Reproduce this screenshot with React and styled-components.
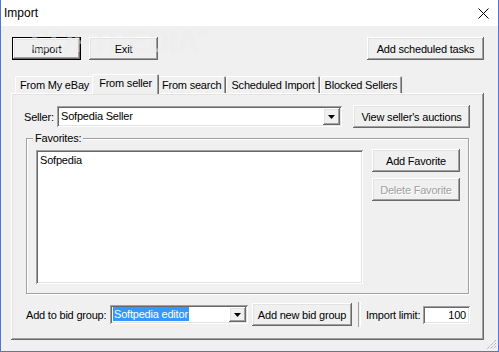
import styled, { createGlobalStyle, css } from 'styled-components';

const bg = '#f0f0f0';
const shadowDark = '#696969';
const shadow = '#a0a0a0';
const light = '#e3e3e3';
const accent = '#4a78d4';

const GlobalStyle = createGlobalStyle`
  html, body {
    margin: 0;
    padding: 0;
    background: #fff;
  }
  body {
    font-family: "Liberation Sans", Arial, sans-serif;
    font-size: 11px;
    color: #000;
  }
`;

const raised = css`
  box-shadow:
    inset -1px -1px ${shadowDark},
    inset 1px 1px #fff,
    inset -2px -2px ${shadow},
    inset 2px 2px ${light};
`;

const sunken = css`
  box-shadow:
    inset 1px 1px ${shadow},
    inset -1px -1px #fff,
    inset 2px 2px ${shadowDark},
    inset -2px -2px ${light};
`;

const Window = styled.div`
  position: relative;
  box-sizing: border-box;
  width: 499px;
  height: 352px;
  border: 1px solid ${accent};
  border-top: none;
  background: ${bg};
  display: flex;
  flex-direction: column;
  overflow: hidden;
  letter-spacing: -0.2px;
`;

const TitleBar = styled.div`
  height: 26px;
  flex: none;
  background: #fff;
  display: flex;
  align-items: center;
  justify-content: space-between;
  padding: 0 9px 0 3px;
  font-size: 12px;
  letter-spacing: 0;
`;

const CloseIcon = styled.svg`
  width: 11px;
  height: 11px;
`;

const Body = styled.div`
  flex: 1;
  display: flex;
  flex-direction: column;
  padding: 11px 14px 0 11px;
`;

const TopRow = styled.div`
  display: flex;
  align-items: center;
  gap: 8px;
  height: 23px;
`;

const Button = styled.button`
  position: relative;
  z-index: 1;
  box-sizing: border-box;
  width: ${p => p.$w || 69}px;
  height: ${p => p.$h || 23}px;
  margin: 0;
  padding: 0;
  border: ${p => (p.$default ? '1px solid #000' : 'none')};
  background: ${bg};
  font: inherit;
  letter-spacing: inherit;
  color: ${p => (p.disabled ? shadow : '#000')};
  text-shadow: ${p => (p.disabled ? '1px 1px #fff' : 'none')};
  flex: none;
  ${raised};
`;

const Spacer = styled.div`
  flex: 1;
`;

const TabRow = styled.div`
  display: flex;
  align-items: flex-end;
  height: 19px;
  margin-top: 14px;
  padding-left: 3px;
`;

const Tab = styled.div`
  position: relative;
  box-sizing: border-box;
  height: ${p => (p.$active ? 20 : 17)}px;
  margin: ${p => (p.$active ? '0 -2px -1px' : '0')};
  padding: 0 ${p => (p.$active ? 7 : 5)}px ${p => (p.$active ? 3 : 0)}px;
  display: flex;
  align-items: center;
  background: ${bg};
  border-radius: 2px 2px 0 0;
  z-index: ${p => (p.$active ? 1 : 0)};
  box-shadow:
    inset 1px 1px #fff,
    inset -1px 0 ${shadowDark},
    inset -2px 0 ${shadow};
`;

const Panel = styled.div`
  box-sizing: border-box;
  height: 247px;
  margin-left: -1px;
  display: flex;
  flex-direction: column;
  padding: 2px;
  ${raised};
`;

const SellerRow = styled.div`
  display: flex;
  align-items: center;
  height: 23px;
  margin-top: 10px;
  padding-left: 11px;
`;

const Label = styled.span`
  width: ${p => p.$w}px;
  flex: none;
  white-space: nowrap;
  margin-left: ${p => p.$ml || 0}px;
`;

const Combo = styled.div`
  box-sizing: border-box;
  width: ${p => p.$w}px;
  height: ${p => p.$h || 20}px;
  margin-right: ${p => p.$mr || 0}px;
  flex: none;
  background: #fff;
  display: flex;
  align-items: center;
  padding: 2px;
  ${sunken};
`;

const ComboText = styled.span`
  flex: 1;
  padding: 0 2px;
  line-height: 15px;
  white-space: nowrap;
`;

const Selected = styled.span`
  background: #3399ff;
  color: #fff;
  padding: 1px 1px;
  margin-left: -1px;
`;

const DropButton = styled.div`
  box-sizing: border-box;
  width: 17px;
  align-self: stretch;
  background: ${bg};
  display: flex;
  align-items: center;
  justify-content: center;
  ${raised};
`;

const Group = styled.div`
  position: relative;
  box-sizing: border-box;
  width: 443px;
  height: 156px;
  margin: 10px 0 0 13px;
  border: 1px solid ${shadow};
  box-shadow: inset 1px 1px #fff, 1px 1px #fff;
  display: flex;
  align-items: flex-start;
  padding: 10px 0 0 9px;
`;

const Legend = styled.span`
  position: absolute;
  top: -7px;
  left: 6px;
  padding: 0 2px;
  background: ${bg};
  line-height: 13px;
`;

const ListBox = styled.div`
  box-sizing: border-box;
  width: 327px;
  height: 134px;
  margin-top: 1px;
  background: #fff;
  padding: 4px 4px;
  ${sunken};
`;

const SideButtons = styled.div`
  display: flex;
  flex-direction: column;
  gap: 6px;
  margin-left: 9px;
`;

const BottomRow = styled.div`
  display: flex;
  align-items: center;
  height: 25px;
  margin-top: 8px;
  padding-left: 13px;
`;

const Separator = styled.div`
  width: 1px;
  height: 25px;
  margin-left: 6px;
  border-left: 1px solid ${shadow};
  border-right: 1px solid #fff;
  flex: none;
`;

const NumberInput = styled.div`
  box-sizing: border-box;
  width: 47px;
  height: 18px;
  background: #fff;
  padding: 0 4px;
  display: flex;
  align-items: center;
  justify-content: flex-end;
  ${sunken};
`;

const Watermark = styled.div`
  position: absolute;
  left: 29px;
  top: 24px;
  z-index: 2;
  font-family: "Liberation Sans", Arial, sans-serif;
  font-weight: bold;
  font-size: 31px;
  letter-spacing: -1px;
  color: rgba(255, 255, 255, 0.45);
  text-shadow: 0 0 1px rgba(0, 0, 0, 0.06);
  pointer-events: none;

  sup {
    font-size: 12px;
    vertical-align: top;
    position: relative;
    top: 2px;
  }
`;

const Grip = styled.svg`
  position: absolute;
  right: 1px;
  bottom: 1px;
  width: 11px;
  height: 11px;
`;

const Arrow = () => (
  <svg width="7" height="4" viewBox="0 0 7 4">
    <path d="M0 0h7L3.5 4z" fill="#000" />
  </svg>
);

const tabs = ['From My eBay', 'From seller', 'From search', 'Scheduled Import', 'Blocked Sellers'];

export default function App() {
  return (
    <>
      <GlobalStyle />
      <Window>
        <TitleBar>
          <span>Import</span>
          <CloseIcon viewBox="0 0 11 11">
            <path d="M0.5 0.5L10.5 10.5M10.5 0.5L0.5 10.5" stroke="#000" strokeWidth="1" />
          </CloseIcon>
        </TitleBar>
        <Body>
          <TopRow>
            <Button $default>Import</Button>
            <Button>Exit</Button>
            <Spacer />
            <Button $w={117}>Add scheduled tasks</Button>
          </TopRow>
          <TabRow>
            {tabs.map(t => (
              <Tab key={t} $active={t === 'From seller'}>{t}</Tab>
            ))}
          </TabRow>
          <Panel>
            <SellerRow>
              <Label $w={33}>Seller:</Label>
              <Combo $w={285} $h={21} $mr={11}>
                <ComboText>Sofpedia Seller</ComboText>
                <DropButton><Arrow /></DropButton>
              </Combo>
              <Button $w={117}>View seller's auctions</Button>
            </SellerRow>
            <Group>
              <Legend>Favorites:</Legend>
              <ListBox>Sofpedia</ListBox>
              <SideButtons>
                <Button $w={88}>Add Favorite</Button>
                <Button $w={88} disabled>Delete Favorite</Button>
              </SideButtons>
            </Group>
            <BottomRow>
              <Label $w={84}>Add to bid group:</Label>
              <Combo $w={138} $h={19}>
                <ComboText><Selected>Softpedia editor</Selected></ComboText>
                <DropButton><Arrow /></DropButton>
              </Combo>
              <Button $w={100} style={{ marginLeft: 4 }}>Add new bid group</Button>
              <Separator />
              <Label $w={57} $ml={5}>Import limit:</Label>
              <NumberInput>100</NumberInput>
            </BottomRow>
          </Panel>
        </Body>
        <Watermark>SOFTPEDIA<sup>®</sup></Watermark>
        <Grip viewBox="0 0 11 11">
          <path d="M10 1L1 10M10 4L4 10M10 7L7 10" stroke="#9a9a9a" strokeWidth="1" strokeDasharray="1 1" />
        </Grip>
      </Window>
    </>
  );
}
